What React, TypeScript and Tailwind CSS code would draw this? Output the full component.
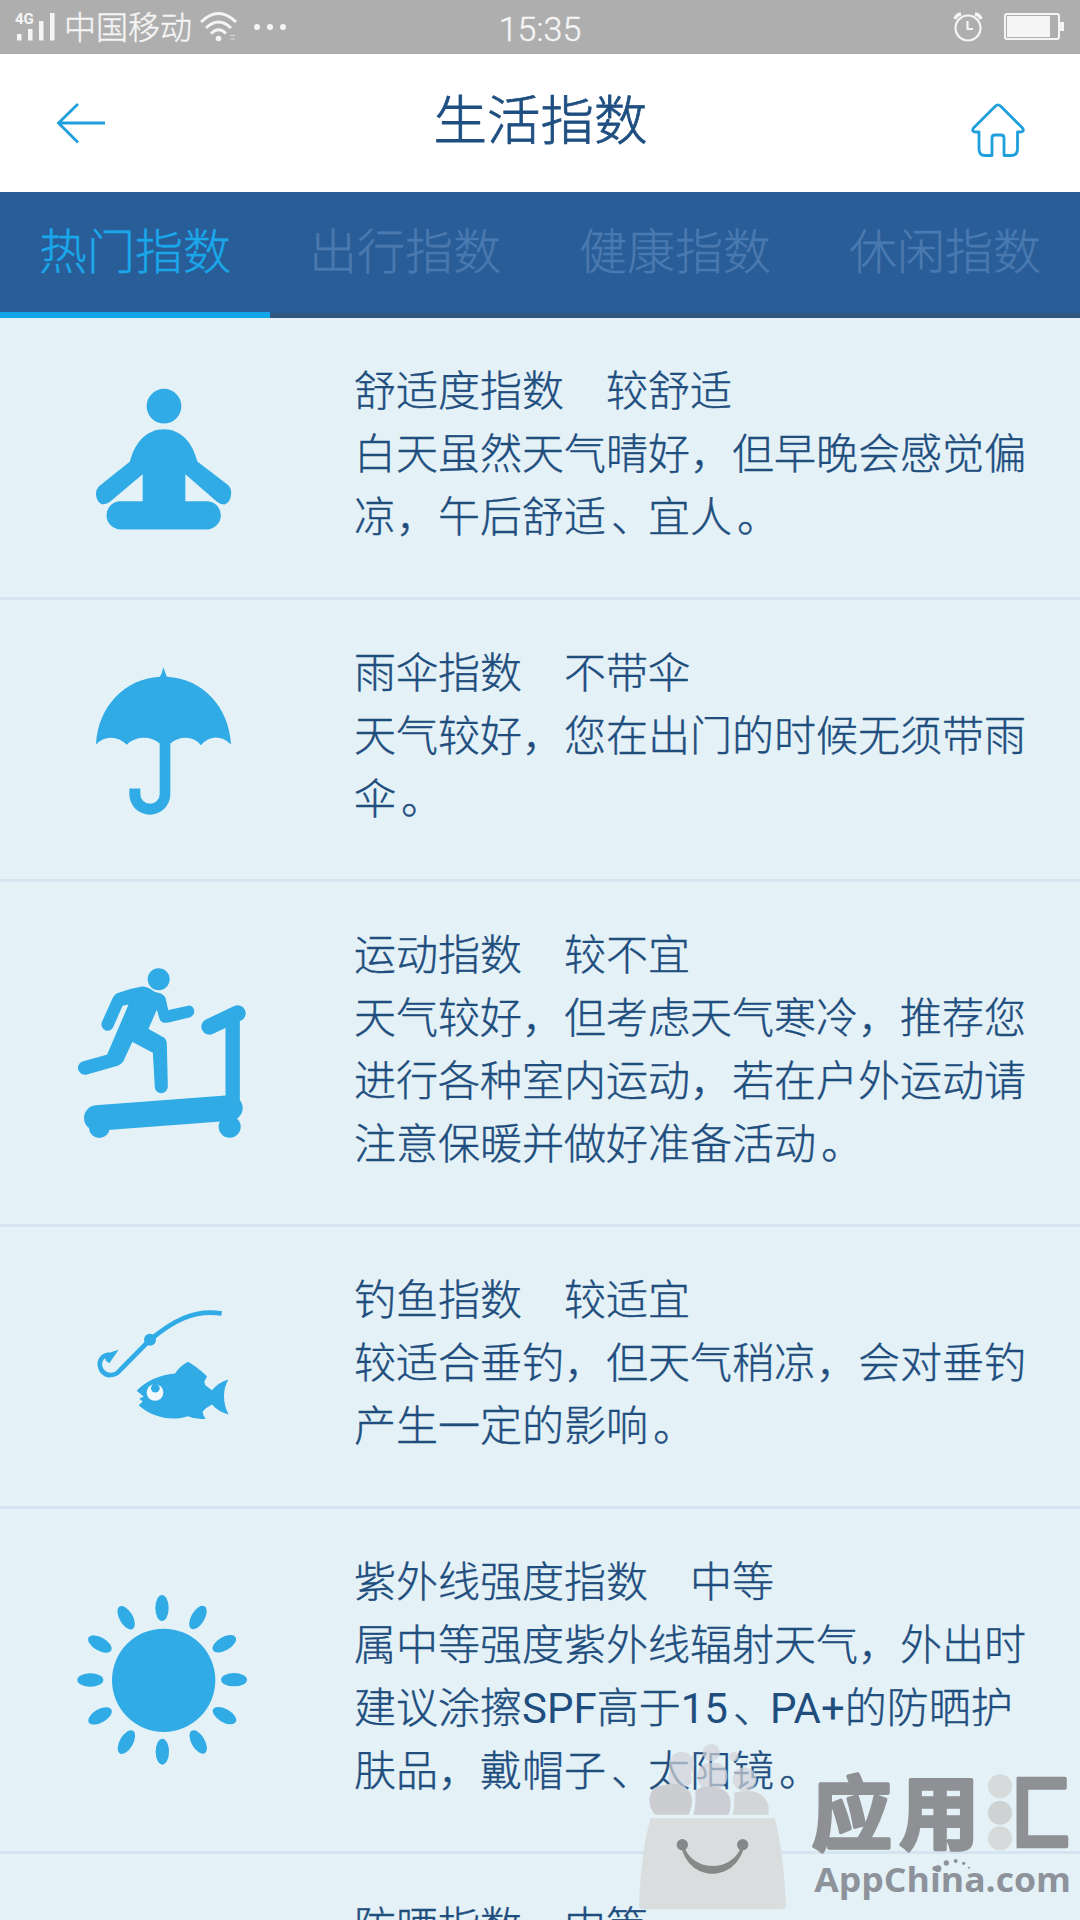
import type { ReactNode } from "react";

type IndexItem = {
  title: string;
  level: string;
  text: string;
  icon: ReactNode;
};

const TABS = ["热门指数", "出行指数", "健康指数", "休闲指数"];

function YogaIcon() {
  return (
    <svg viewBox="0 -7.5 660 600" className="h-[200px] w-[220px]" fill="#30abe5">
      <circle cx="312" cy="137" r="52" />
      <path d="M311 206C363 206 398 246 412 303L503 373Q516 384 513 403Q512 424 494 432Q482 433 471 424L376 341V422H440A42 42 0 0 1 440 507H182A42 42 0 0 1 182 422H248V341L150 424Q139 433 125 431Q110 424 108 403Q106 390 117 377L210 303C224 246 260 206 311 206Z" />
    </svg>
  );
}

function UmbrellaIcon() {
  return (
    <svg viewBox="0 -1.5 660 600" className="h-[200px] w-[220px]" fill="#30abe5">
      <path d="M310 80Q316 98 321 109C428 115 507 199 513 312Q493 291 467 291Q440 293 423 314Q404 292 377 292Q351 292 331 309V461A61 61 0 0 1 208 461V444H241V461A28 28 0 0 0 299 461V309Q278 291 249 292Q220 293 200 313Q178 291 152 292Q127 293 108 312C114 199 193 115 300 109Q306 99 310 80Z" />
    </svg>
  );
}

function TreadmillIcon() {
  return (
    <svg
      viewBox="0 9 660 600"
      className="h-[200px] w-[220px]"
      fill="#30abe5"
      stroke="#30abe5"
      strokeLinecap="round"
      strokeLinejoin="round"
    >
      <circle cx="296" cy="88" r="33" stroke="none" />
      <path
        strokeWidth="5"
        d="M172 132Q210 118 246 112Q262 112 274 122Q285 132 300 132Q316 138 317 158L323 183L388 169Q401 171 400 187Q399 195 391 199L322 216Q305 217 301 206L291 172L262 238L309 264Q317 269 318 281L321 410Q319 425 304 427Q290 427 287 413L281 307L216 272L188 332Q182 341 172 345L78 372Q63 373 56 356Q56 342 68 337L143 316L210 160L186 165L157 231Q150 242 138 239Q125 232 127 219L160 146Q164 136 172 132Z"
      />
      <path d="M448 230L533 190" strokeWidth="48" fill="none" />
      <path d="M518 205V460" strokeWidth="43" strokeLinecap="butt" fill="none" />
      <path d="M110 504L510 474" strokeWidth="76" fill="none" />
      <circle cx="118" cy="533" r="31" stroke="none" />
      <circle cx="509" cy="530" r="33" stroke="none" />
    </svg>
  );
}

function FishingIcon() {
  return (
    <svg viewBox="0 -40.5 660 600" className="h-[200px] w-[220px]" fill="#30abe5">
      <path
        d="M485 99C400 86 338 122 270 178L181 268C165 288 139 289 125 270C112 247 123 224 148 222"
        fill="none"
        stroke="#30abe5"
        strokeWidth="14"
      />
      <circle cx="270" cy="178" r="18" />
      <path d="M176 208L148 248L137 240L134 221Z" />
      <path d="M230 331C255 304 296 283 345 279Q361 256 384 244Q408 257 441 287L433 304L436 314L456 329Q475 306 505 297Q492 322 492 345Q492 377 506 402Q475 394 456 372Q440 380 428 393Q428 406 437 415Q407 418 384 407C333 424 275 409 236 374L248 363L238 355L251 348Z" />
      <circle cx="285" cy="336" r="25" fill="#f1f9fd" />
      <circle cx="286" cy="323" r="13" />
    </svg>
  );
}

function SunIcon() {
  const angles = [0, 30, 60, 90, 120, 150, 180, 210, 240, 270, 300, 330];
  return (
    <svg viewBox="0 0 660 600" className="h-[200px] w-[220px]" fill="#30abe5">
      <circle cx="311" cy="301" r="155" />
      {angles.map((a) => (
        <ellipse
          key={a}
          cx="306"
          cy="84"
          rx="20"
          ry="39"
          transform={`rotate(${a} 306.5 299.5)`}
        />
      ))}
    </svg>
  );
}

const ITEMS: IndexItem[] = [
  {
    title: "舒适度指数",
    level: "较舒适",
    text: "白天虽然天气晴好，但早晚会感觉偏凉，午后舒适、宜人。",
    icon: <YogaIcon />,
  },
  {
    title: "雨伞指数",
    level: "不带伞",
    text: "天气较好，您在出门的时候无须带雨伞。",
    icon: <UmbrellaIcon />,
  },
  {
    title: "运动指数",
    level: "较不宜",
    text: "天气较好，但考虑天气寒冷，推荐您进行各种室内运动，若在户外运动请注意保暖并做好准备活动。",
    icon: <TreadmillIcon />,
  },
  {
    title: "钓鱼指数",
    level: "较适宜",
    text: "较适合垂钓，但天气稍凉，会对垂钓产生一定的影响。",
    icon: <FishingIcon />,
  },
  {
    title: "紫外线强度指数",
    level: "中等",
    text: "属中等强度紫外线辐射天气，外出时建议涂擦SPF高于15、PA+的防晒护肤品，戴帽子、太阳镜。",
    icon: <SunIcon />,
  },
  {
    title: "防晒指数",
    level: "中等",
    text: "",
    icon: null,
  },
];

function StatusBar() {
  return (
    <div className="grid h-[54px] shrink-0 grid-cols-3 items-center bg-[#aeaeae] text-[#f5f5f5]">
      <div className="flex items-center pl-[15px]">
        <svg
          viewBox="0 0 40 30"
          className="h-[30px] w-[40px] overflow-visible [-webkit-text-stroke:0px]"
          fill="currentColor"
        >
          <text x="0" y="11.5" fontSize="15" fontWeight="700" fontFamily="Roboto, sans-serif">
            4G
          </text>
          <rect x="2" y="22" width="4.5" height="6.5" />
          <rect x="13" y="17" width="4.5" height="11.5" />
          <rect x="24" y="9" width="4.5" height="19.5" />
          <rect x="35" y="1" width="4.5" height="27.5" />
        </svg>
        <span className="ml-[9px] pt-[2px] text-[32px] leading-none">中国移动</span>
        <svg
          viewBox="0 0 38 32"
          className="ml-[8px] h-[32px] w-[38px]"
          fill="none"
          stroke="currentColor"
          strokeWidth="3"
        >
          <path d="M1 11Q18.500 -6 36 11M6 17Q18.500 5 31 17M11 22.500Q18.500 15 26 22.500" />
          <circle cx="18.500" cy="27.500" r="2.800" fill="currentColor" stroke="none" />
          <path d="M30 24.500H35M30 28H35" strokeWidth="1" opacity="0.6" />
        </svg>
        <svg viewBox="0 0 34 8" className="ml-[15px] h-[8px] w-[34px]" fill="currentColor">
          <circle cx="4" cy="4" r="3" />
          <circle cx="17" cy="4" r="3" />
          <circle cx="30" cy="4" r="3" />
        </svg>
      </div>
      <div className="pt-[4px] text-center text-[34px] leading-none">15:35</div>
      <div className="flex items-center justify-end pr-[16px]">
        <svg
          viewBox="0 0 30 30"
          className="h-[30px] w-[30px]"
          fill="none"
          stroke="currentColor"
          strokeWidth="2.2"
        >
          <circle cx="15" cy="16" r="12.500" />
          <path d="M14.500 9V17H20" />
          <path d="M2 7Q3 3 8 2M22 2Q27 3 28 7" strokeWidth="3.4" />
        </svg>
        <svg viewBox="0 0 60 28" className="ml-[21px] h-[28px] w-[60px]" fill="currentColor">
          <rect x="1" y="1" width="54" height="25" rx="2" fill="none" stroke="currentColor" strokeWidth="2" />
          <rect x="3" y="3" width="43" height="21" />
          <rect x="56" y="9" width="4" height="9" />
        </svg>
      </div>
    </div>
  );
}

function Header() {
  return (
    <header className="flex h-[138px] shrink-0 items-center justify-between bg-white pl-[56px] pr-[55px] text-[#1f9fdb]">
      <svg
        viewBox="0 0 54 42"
        className="h-[42px] w-[54px]"
        fill="none"
        stroke="currentColor"
        strokeWidth="2.8"
      >
        <path d="M49 21H2.500M22 2L2.500 21L22 40.500" />
      </svg>
      <h1 className="pb-[2px] text-[53.5px] leading-none text-[#1f4e80] [-webkit-text-stroke:0.8px_#1f4e80]">
        生活指数
      </h1>
      <svg
        viewBox="0 0 54 54"
        className="mt-[13px] h-[54px] w-[54px]"
        fill="none"
        stroke="currentColor"
        strokeWidth="2.8"
        strokeLinejoin="round"
      >
        <path d="M24.500 3Q27 0.800 29.500 3L51.500 25Q54 29 49 29H46.500V46Q46.500 52.500 40 52.500H33V35Q33 32 30 32H24Q21 32 21 35V52.500H14Q8 52.500 8 46V29H5Q0 29 2.500 25Z" />
      </svg>
    </header>
  );
}

function Tabs() {
  return (
    <nav className="grid h-[126px] shrink-0 grid-cols-4 bg-[#285d97]">
      {TABS.map((tab, i) => (
        <div
          key={tab}
          className={
            i === 0
              ? "flex items-center justify-center border-b-[6px] border-[#12a5ec] pt-[1px] text-[48px] leading-none text-[#1aa7ea]"
              : "flex items-center justify-center border-b-[5px] border-[#31587f] text-[48px] leading-none text-[#4a79b0]"
          }
        >
          {tab}
        </div>
      ))}
    </nav>
  );
}

// Latin runs are heavier than the Chinese text, full stops sit a bit further right
function renderText(text: string) {
  return text.split(/([A-Z0-9+]+|[。、])/).map((part, i) => {
    if (/^[A-Z0-9+]+$/.test(part)) {
      return (
        <span key={i} className="font-normal [-webkit-text-stroke:0px]">
          {part}
        </span>
      );
    }
    if (part === "。" || part === "、") {
      return (
        <span key={i} className="pl-[5px] tracking-[-5px]">
          {part}
        </span>
      );
    }
    return part;
  });
}

function IndexRow({ title, level, text, icon }: IndexItem) {
  return (
    <li className="flex shrink-0 items-center border-b-[3px] border-[#d6e4ef]">
      <div className="ml-[60px] mr-[74px] w-[220px] shrink-0">{icon}</div>
      <div className="w-[690px] pb-[48px] pt-[42px] text-[42px] leading-[63px] text-[#1f4e7e]">
        <p>
          {title}　{level}
        </p>
        <p>{renderText(text)}</p>
      </div>
    </li>
  );
}

function Watermark() {
  return (
    <svg
      viewBox="0 0 1380 600"
      className="absolute bottom-0 right-0 h-[200px] w-[460px] [-webkit-text-stroke:0px]"
    >
      <g fill="#d3d4d9" opacity="0.7">
        <circle cx="185" cy="133" r="38" />
        <circle cx="274" cy="98" r="26" />
        <circle cx="342" cy="110" r="14" />
        <rect x="232" y="128" width="90" height="80" rx="36" />
        <rect x="145" y="150" width="70" height="50" rx="20" />
        <circle cx="374" cy="178" r="36" />
      </g>
      <path d="M106 284Q88 268 88 240Q92 198 130 196Q165 184 196 202Q216 216 216 244Q214 270 206 284Z" fill="#cbcdd0" />
      <path d="M220 284Q228 260 226 212Q245 196 276 200Q318 202 330 232Q335 264 326 284Z" fill="#cdced3" />
      <path d="M338 284Q346 250 342 218Q366 210 398 214Q440 224 446 260V284Z" fill="#d3d6d6" />
      <path d="M92 295H464Q490 390 498 555Q498 568 484 568H70Q56 568 57 553Q64 390 92 295Z" fill="#dadddd" />
      <circle cx="187" cy="374" r="17" fill="#85888a" />
      <circle cx="368" cy="374" r="17" fill="#85888a" />
      <path d="M184 382C210 488 344 488 372 382L362 384C332 456 224 456 194 384Z" fill="#858988" />
      <g
        fill="#8e9094"
        className="[-webkit-text-stroke:11px_#8e9094]"
        strokeLinejoin="round"
        fontFamily="'Noto Sans CJK SC', sans-serif"
        fontWeight="700"
        fontSize="240"
        stroke="#8e9094"
        strokeWidth="11"
      >
        <text x="575" y="368">
          应
        </text>
        <text x="838" y="366">
          用
        </text>
        <clipPath id="hui">
          <rect x="1190" y="120" width="190" height="290" />
        </clipPath>
        <text x="1108" y="366" clipPath="url(#hui)">
          汇
        </text>
      </g>
      <g fill="#d7dadb">
        <circle cx="1140" cy="199" r="36" />
        <circle cx="1140" cy="278" r="36" fill="#cfd2d2" />
        <circle cx="1140" cy="355" r="36" />
      </g>
      <g fill="#8d929b">
        <circle cx="954" cy="446" r="10" />
        <circle cx="979" cy="429" r="8" />
        <circle cx="1007" cy="423" r="6" />
        <circle cx="1031" cy="430" r="5" />
        <circle cx="1047" cy="443" r="3" />
        <text
          x="583"
          y="517"
          fontSize="103"
          fontWeight="700"
          fontFamily="'Open Sans', sans-serif"
          textLength="770"
          lengthAdjust="spacingAndGlyphs"
        >
          AppChina.com
        </text>
      </g>
    </svg>
  );
}

export default function App() {
  return (
    <div className="relative flex h-[1920px] w-[1080px] flex-col overflow-hidden bg-[#e4f2f8] font-[Roboto,'Noto_Sans_CJK_SC',sans-serif] font-light [-webkit-text-stroke:0.4px_currentColor]">
      <StatusBar />
      <Header />
      <Tabs />
      <ul className="flex flex-col">
        {ITEMS.map((item) => (
          <IndexRow key={item.title} {...item} />
        ))}
      </ul>
      <Watermark />
    </div>
  );
}
